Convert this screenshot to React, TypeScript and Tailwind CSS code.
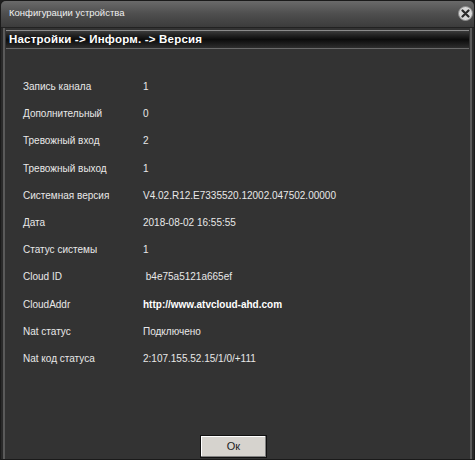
import React from "react";

const rows: { label: string; value: string; bold?: boolean }[] = [
  { label: "Запись канала", value: "1" },
  { label: "Дополнительный", value: "0" },
  { label: "Тревожный вход", value: "2" },
  { label: "Тревожный выход", value: "1" },
  { label: "Системная версия", value: "V4.02.R12.E7335520.12002.047502.00000" },
  { label: "Дата", value: "2018-08-02 16:55:55" },
  { label: "Статус системы", value: "1" },
  { label: "Cloud ID", value: "\u00a0b4e75a5121a665ef" },
  { label: "CloudAddr", value: "http://www.atvcloud-ahd.com", bold: true },
  { label: "Nat статус", value: "Подключено" },
  { label: "Nat код статуса", value: "2:107.155.52.15/1/0/+111" },
];

const App = () => {
  return (
    <div className="w-[475px] h-[460px] bg-[#1e1e1e] font-['Liberation_Sans',Arial,sans-serif] overflow-hidden">
      <div className="w-full h-full flex flex-col bg-[#333333] rounded-t-[5px] border border-[#1a1a1a]">
        <div className="h-[27px] shrink-0 flex items-center justify-between pl-[8px] pr-[1px] pb-[1px] rounded-t-[5px] bg-gradient-to-b from-[#6a6a6a] via-[#4e4e4e] to-[#3c3c3c] border-b border-[#222222]">
          <span className="text-[9.5px] text-[#f0f0f0]">Конфигурации устройства</span>
          <div className="w-[15px] h-[15px] rounded-full bg-[#d8d8d8] border border-[#888] flex items-center justify-center">
            <svg width="9" height="9" viewBox="0 0 9 9">
              <path d="M1.5 1.5 L7.5 7.5 M7.5 1.5 L1.5 7.5" stroke="#2a2a2a" strokeWidth="2.2" strokeLinecap="round" />
            </svg>
          </div>
        </div>
        <div className="flex-1 flex">
          <div className="w-[2px] bg-[#2a2a2a]" />
          <div className="w-[2px] bg-[#5a5a5a]" />
          <div className="flex-1 flex flex-col">
            <div className="mt-[2px] mx-[1px] h-[19px] border-t border-[#8a8a8a] border-b border-b-[#6a6a6a] bg-gradient-to-b from-[#3a3a3a] via-[#0c0c0c] to-[#2e2e2e] flex items-center pl-[3px]">
              <span className="text-[11.5px] font-bold text-white tracking-[0.2px]">Настройки -&gt; Информ. -&gt; Версия</span>
            </div>
            <div className="flex flex-col pt-[24px] pl-[18px]">
              {rows.map((r, i) => (
                <div key={i} className="h-[27.2px] flex items-center text-[10px] text-[#e8e8e8]">
                  <span className="w-[120px]">{r.label}</span>
                  <span className={r.bold ? "font-bold text-white" : ""}>{r.value}</span>
                </div>
              ))}
            </div>
            <div className="flex-1" />
            <div className="flex justify-center pb-[1px] pr-[8px]">
              <button className="w-[67px] h-[23px] bg-[#d6d3ce] border border-[#111] shadow-[inset_-1px_-1px_0_#808080,inset_1px_1px_0_#ffffff] text-[11px] text-[#222]">
                Ок
              </button>
            </div>
          </div>
          <div className="w-[2px] bg-[#5a5a5a]" />
          <div className="w-[2px] bg-[#2a2a2a]" />
        </div>
      </div>
    </div>
  );
};

export default App;
